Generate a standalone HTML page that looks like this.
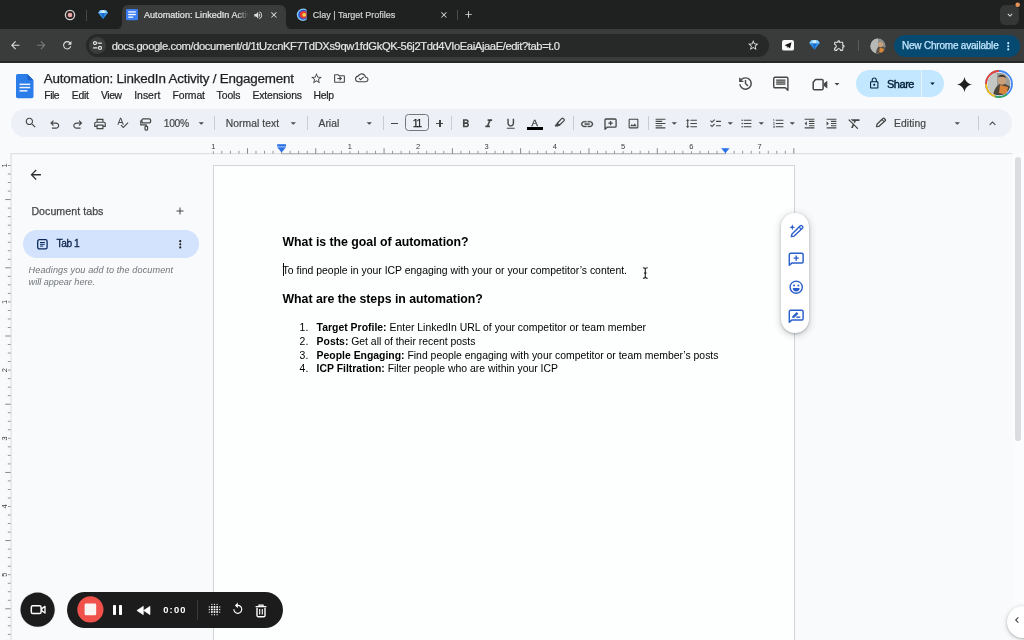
<!DOCTYPE html>
<html lang="en">
<head>
<meta charset="utf-8">
<title>Automation: LinkedIn Activity / Engagement</title>
<style>
*{box-sizing:border-box;margin:0;padding:0}
html,body{width:1024px;height:640px;overflow:hidden;background:#f8fafb;font-family:"Liberation Sans",sans-serif}
.abs{position:absolute}
.t{position:absolute;white-space:nowrap;line-height:1}
svg{position:absolute;overflow:visible}
#root{will-change:transform;position:absolute;left:0;top:0;width:1024px;height:640px;overflow:hidden;background:#f8fafb}
b{font-weight:700}
</style>
</head>
<body>
<div id="root">
<div class="abs" style="left:0px;top:0px;width:1024px;height:29px;background:#1f2020;border-radius:0px;"></div>
<div class="abs" style="left:0px;top:29px;width:1024px;height:32.5px;background:#3a3b3b;border-radius:0px;"></div>
<div class="abs" style="left:0px;top:61px;width:1024px;height:1.5px;background:#262727;border-radius:0px;"></div>
<svg style="left:0;top:0" width="1024" height="30" viewBox="0 0 1024 30"><path fill="#3a3b3b" d="M115 29.500 Q122 29.500 122 22.500 L122 12 Q122 5 129 5 L279 5 Q286 5 286 12 L286 22.500 Q286 29.500 293 29.500 Z"/></svg>
<svg style="left:63.900px;top:8.800px" width="12" height="12" viewBox="0 0 12 12"><circle cx="6" cy="6" r="4.600" fill="#2a2020" stroke="#d8d4d4" stroke-width="1.300"/><circle cx="6" cy="6" r="2.300" fill="#eaa6a6"/></svg>
<div class="abs" style="left:85.5px;top:9.5px;width:1px;height:11.5px;background:#454646;border-radius:0px;"></div>
<svg style="left:97.64px;top:10.099999999999998px" width="10.120000000000001" height="9.200000000000001" viewBox="0 0 11 10"><path d="M2.300 0.300H8.700L10.800 3.300 5.500 9.800 0.200 3.300Z" fill="#2f8de4"/><path d="M2.300 0.300H8.700L10.800 3.300H0.200Z" fill="#8fd0ff"/><path d="M3.800 3.300H7.200L5.500 9.800Z" fill="#1668c9"/><path d="M4 0.300H7L7.200 3.300H3.800Z" fill="#d6f0ff"/></svg>
<svg style="left:126.300px;top:9.300px" width="12" height="11.200" viewBox="0 0 12 11.200"><rect width="12" height="11.200" rx="1.200" fill="#3d7ef0"/><rect x="2.200" y="2.300" width="7.600" height="1.300" fill="#fff"/><rect x="2.200" y="4.900" width="7.600" height="1.300" fill="#fff"/><rect x="2.200" y="7.500" width="5" height="1.300" fill="#fff"/></svg>
<svg style="left:252.55px;top:9.55px" width="10.5" height="10.5" viewBox="0 0 24 24"><path fill="#dcdcdc" d="M3 9v6h4l5 5V4L7 9H3zm13.500 3c0-1.770-1.020-3.290-2.500-4.030v8.050c1.480-.730 2.500-2.250 2.500-4.020zM14 3.230v2.060c2.890.860 5 3.540 5 6.710s-2.110 5.850-5 6.710v2.060c4.010-.910 7-4.490 7-8.770s-2.990-7.860-7-8.770z" /></svg>
<svg style="left:269.40px;top:9.90px" width="9.8" height="9.8" viewBox="0 0 24 24"><path fill="#e6e6e6" d="M19 6.41L17.59 5 12 10.59 6.41 5 5 6.41 10.59 12 5 17.59 6.41 19 12 13.41 17.59 19 19 17.59 13.41 12z" /></svg>
<svg style="left:296px;top:8px" width="12" height="14" viewBox="296 8 12 14"><defs><clipPath id="clayc"><rect x="295" y="7" width="11.600" height="16"/></clipPath></defs><g clip-path="url(#clayc)"><circle cx="303" cy="14.800" r="6.200" fill="#86c8f2"/><circle cx="303.200" cy="14.800" r="5" fill="#2f55d4"/><circle cx="303.600" cy="14.800" r="3.700" fill="#e63b30"/><circle cx="304.200" cy="14.800" r="1.900" fill="#f6d24c"/></g></svg>
<svg style="left:438.60px;top:9.90px" width="9.8" height="9.8" viewBox="0 0 24 24"><path fill="#dcdcdc" d="M19 6.41L17.59 5 12 10.59 6.41 5 5 6.41 10.59 12 5 17.59 6.41 19 12 13.41 17.59 19 19 17.59 13.41 12z" /></svg>
<div class="abs" style="left:456.7px;top:9.8px;width:1px;height:10.7px;background:#4a4b4b;border-radius:0px;"></div>
<svg style="left:463.40px;top:8.90px" width="11.2" height="11.2" viewBox="0 0 24 24"><path fill="#dcdcdc" d="M19 13h-6v6h-2v-6H5v-2h6V5h2v6h6v2z" /></svg>
<div class="abs" style="left:1000px;top:5px;width:19px;height:19.5px;background:#353636;border-radius:5.5px;"></div>
<svg style="left:1004.50px;top:10.00px" width="10" height="10" viewBox="0 0 24 24"><path fill="#e3e3e3" d="M16.590 8.590L12 13.170 7.410 8.590 6 10l6 6 6-6z" /></svg>
<svg style="left:1014.800px;top:2.200px" width="5.400" height="5.400" viewBox="0 0 5.400 5.400"><circle cx="2.700" cy="2.700" r="2.300" fill="#e8925a"/></svg>
<svg style="left:9.45px;top:39.35px" width="12.5" height="12.5" viewBox="0 0 24 24"><path fill="#dedede" d="M20 11H7.83l5.59-5.59L12 4l-8 8 8 8 1.41-1.41L7.83 13H20v-2z" /></svg>
<svg style="left:34.95px;top:39.35px" width="12.5" height="12.5" viewBox="0 0 24 24"><path fill="#7b7c7c" d="M12 4l-1.41 1.41L16.17 11H4v2h12.17l-5.58 5.59L12 20l8-8z" /></svg>
<svg style="left:60.65px;top:39.15px" width="12.5" height="12.5" viewBox="0 0 24 24"><path fill="#dedede" d="M17.65 6.35C16.2 4.9 14.21 4 12 4c-4.42 0-7.99 3.58-7.99 8s3.57 8 7.99 8c3.73 0 6.84-2.55 7.73-6h-2.08c-.82 2.33-3.04 4-5.65 4-3.31 0-6-2.69-6-6s2.69-6 6-6c1.66 0 3.14.69 4.22 1.78L13 11h7V4l-2.35 2.35z" /></svg>
<div class="abs" style="left:86px;top:34px;width:683px;height:23px;background:#272828;border-radius:11.5px;"></div>
<svg style="left:88.500px;top:37px" width="17" height="17" viewBox="0 0 17 17"><circle cx="8.500" cy="8.500" r="8.500" fill="#3b3c3c"/><g stroke="#e3e3e3" stroke-width="1.200" fill="none" stroke-linecap="round"><circle cx="6" cy="6.100" r="1.500"/><path d="M9 6.100H12.500"/><circle cx="11" cy="10.900" r="1.500"/><path d="M4.500 10.900H8"/></g></svg>
<svg style="left:746.75px;top:39.05px" width="12.5" height="12.5" viewBox="0 0 24 24"><path fill="#e3e3e3" d="M22 9.24l-7.19-.62L12 2 9.19 8.63 2 9.24l5.46 4.73L5.82 21 12 17.27 18.18 21l-1.63-7.03L22 9.24zM12 15.4l-3.76 2.27 1-4.28-3.32-2.88 4.38-.38L12 6.1l1.71 4.04 4.38.38-3.32 2.88 1 4.28L12 15.4z" /></svg>
<svg style="left:782px;top:40.200px" width="12" height="10.600" viewBox="0 0 12.600 10.600" preserveAspectRatio="none"><rect width="12.600" height="10.600" rx="2.200" fill="#fbfbfb"/><path d="M2.600 5.200 10 2.300 8.400 8.600 6 6.500 5.300 8.200 4.900 6.100Z" fill="#151515"/></svg>
<svg style="left:808.5px;top:39.8px" width="11.0" height="10.0" viewBox="0 0 11 10"><path d="M2.300 0.300H8.700L10.800 3.300 5.500 9.800 0.200 3.300Z" fill="#2f8de4"/><path d="M2.300 0.300H8.700L10.800 3.300H0.200Z" fill="#8fd0ff"/><path d="M3.800 3.300H7.200L5.500 9.800Z" fill="#1668c9"/><path d="M4 0.300H7L7.200 3.300H3.800Z" fill="#d6f0ff"/></svg>
<svg style="left:833.30px;top:38.80px" width="13" height="13" viewBox="0 0 24 24"><path fill="#e3e3e3" d="M10.500 4.500c.280 0 .500.220.500.500v2h6v6h2c.280 0 .500.220.500.500s-.220.500-.500.500h-2v6h-2.120c-.680-1.750-2.390-3-4.380-3s-3.700 1.250-4.380 3H4v-2.120c1.750-.680 3-2.390 3-4.380 0-1.990-1.240-3.700-2.990-4.380L4 7h6V5c0-.280.220-.500.500-.500m0-2C9.120 2.500 8 3.620 8 5H4c-1.100 0-1.990.900-1.990 2v3.800h.290c1.490 0 2.700 1.210 2.700 2.700s-1.210 2.700-2.700 2.700H2V20c0 1.100.900 2 2 2h3.800v-.300c0-1.490 1.210-2.700 2.700-2.700s2.700 1.210 2.700 2.700v.300H17c1.100 0 2-.900 2-2v-4c1.380 0 2.500-1.120 2.500-2.500S20.380 11 19 11V7c0-1.100-.900-2-2-2h-4c0-1.380-1.120-2.500-2.500-2.500z" /></svg>
<div class="abs" style="left:858.3px;top:40px;width:1px;height:11px;background:#5a5b5b;border-radius:0px;"></div>
<svg style="left:870px;top:37.500px" width="16" height="16" viewBox="0 0 16 16"><defs><clipPath id="av1"><circle cx="8" cy="8" r="7.600"/></clipPath></defs><g clip-path="url(#av1)"><rect width="16" height="16" fill="#8e8f8c"/><rect x="0" y="0" width="8" height="16" fill="#b7b9b6"/><path d="M6 16C6 10 9 7 12 8L16 10V16Z" fill="#5c5348"/><circle cx="10.500" cy="6.500" r="2.600" fill="#c9a07c"/><path d="M10 9.500 14 11 13 15 9 14Z" fill="#d8873a"/></g></svg>
<div class="abs" style="left:894px;top:34.7px;width:125.5px;height:22.2px;background:#064a72;border-radius:11.1px;"></div>
<svg style="left:1002.05px;top:39.55px" width="12.5" height="12.5" viewBox="0 0 24 24"><path fill="#c2e7ff" d="M12 8c1.1 0 2-.9 2-2s-.9-2-2-2-2 .9-2 2 .9 2 2 2zm0 2c-1.1 0-2 .9-2 2s.9 2 2 2 2-.9 2-2-.9-2-2-2zm0 6c-1.1 0-2 .9-2 2s.9 2 2 2 2-.9 2-2-.9-2-2-2z" /></svg>
<svg style="left:15.500px;top:73.700px" width="17.500" height="24.300" viewBox="0 0 17.500 24.300"><path d="M1.800 0H11.300L17.500 6.200V22.500A1.800 1.800 0 0 1 15.700 24.300H1.800A1.800 1.800 0 0 1 0 22.500V1.800A1.800 1.800 0 0 1 1.800 0Z" fill="#2b7de9"/><path d="M11.300 0 17.500 6.200H13.100A1.800 1.800 0 0 1 11.300 4.400Z" fill="#1b62c9"/><rect x="3.500" y="9.600" width="10.700" height="1.500" fill="#eef4fe"/><rect x="3.500" y="12.800" width="10.700" height="1.500" fill="#eef4fe"/><rect x="3.500" y="16.100" width="7.900" height="1.500" fill="#eef4fe"/></svg>
<svg style="left:309.80px;top:71.50px" width="13" height="13" viewBox="0 0 24 24"><path fill="#444746" d="M22 9.24l-7.19-.62L12 2 9.19 8.63 2 9.24l5.46 4.73L5.82 21 12 17.27 18.18 21l-1.63-7.03L22 9.24zM12 15.4l-3.76 2.27 1-4.28-3.32-2.88 4.38-.38L12 6.1l1.71 4.04 4.38.38-3.32 2.88 1 4.28L12 15.4z" /></svg>
<svg style="left:332.50px;top:71.50px" width="13" height="13" viewBox="0 0 24 24"><path fill="#444746" d="M20 6h-8l-2-2H4c-1.100 0-2 .900-2 2v12c0 1.100.900 2 2 2h16c1.100 0 2-.900 2-2V8c0-1.100-.900-2-2-2zm0 12H4V6h5.170l2 2H20v10zm-7.160-5H8v-2h4.840l-1.590-1.590L12.660 8l4 4-4 4-1.410-1.410L12.840 13z" /></svg>
<svg style="left:355.25px;top:71.25px" width="13.5" height="13.5" viewBox="0 0 24 24"><path fill="#444746" d="M19.350 10.040C18.670 6.590 15.640 4 12 4 9.110 4 6.600 5.640 5.350 8.040 2.340 8.360 0 10.910 0 14c0 3.310 2.690 6 6 6h13c2.760 0 5-2.240 5-5 0-2.640-2.050-4.780-4.650-4.960zM19 18H6c-2.210 0-4-1.790-4-4 0-2.050 1.530-3.760 3.560-3.970l1.070-.110.500-.950C8.080 7.140 9.940 6 12 6c2.620 0 4.880 1.860 5.390 4.430l.300 1.500 1.530.110c1.560.100 2.780 1.410 2.780 2.960 0 1.650-1.350 3-3 3zm-9-3.820l-2.090-2.090L6.500 13.500 10 17l6.010-6.010-1.410-1.410z" /></svg>
<svg style="left:737px;top:75.200px" width="17" height="17" viewBox="0 0 24 24"><path fill="#444746" d="M12 21q-3.450 0-6.012-2.287T3.050 13H5.100q.350 2.600 2.313 4.300T12 19q2.925 0 4.963-2.037T19 12q0-2.925-2.037-4.963T12 5q-1.725 0-3.225.800T6.250 8H9v2H3V4h2v2.350q1.275-1.600 3.113-2.475T12 3q1.875 0 3.513.713t2.850 1.925q1.212 1.212 1.925 2.850T21 12q0 1.875-.713 3.513t-1.925 2.850q-1.212 1.212-2.850 1.925T12 21Zm2.800-4.800L11 12.400V7h2v4.600l3.200 3.200-1.400 1.400Z"/></svg>
<svg style="left:773px;top:76.300px" width="16" height="15.500" viewBox="0 0 16 15.500"><path d="M2 1.300H13.600A1.300 1.300 0 0 1 14.900 2.600V14.200L12.300 11.800H2A1.300 1.300 0 0 1 0.700 10.500V2.600A1.300 1.300 0 0 1 2 1.300Z" fill="none" stroke="#444746" stroke-width="1.400" stroke-linejoin="round"/><path d="M3.200 4.100H12.400M3.200 6.100H12.400M3.200 8.100H12.400" stroke="#444746" stroke-width="1.300"/><path d="M3.200 5.100H12.400M3.200 7.100H12.400" stroke="#444746" stroke-width="0.700" opacity="0.550"/></svg>
<svg style="left:811.500px;top:77.500px" width="16" height="13" viewBox="0 0 16 13"><path d="M3.600 1.500H9.800A1.300 1.300 0 0 1 11.100 2.800V10.400A1.300 1.300 0 0 1 9.800 11.700H2.500A1.300 1.300 0 0 1 1.200 10.400V4.200Z" fill="none" stroke="#444746" stroke-width="1.500" stroke-linejoin="round"/><path d="M12 5.300 15.300 2.700V10.500L12 7.900Z" fill="#444746"/></svg>
<svg style="left:830.70px;top:77.90px" width="12" height="12" viewBox="0 0 24 24"><path fill="#444746" d="M7 10l5 5 5-5z" /></svg>
<div class="abs" style="left:856px;top:70px;width:88.2px;height:27px;background:#c2e7ff;border-radius:13.5px;"></div>
<div class="abs" style="left:920.6px;top:70px;width:1px;height:27px;background:#e8f4fd;border-radius:0px;"></div>
<svg style="left:867.65px;top:77.05px" width="12.5" height="12.5" viewBox="0 0 24 24"><path fill="#001d35" d="M18 8h-1V6c0-2.760-2.240-5-5-5S7 3.240 7 6v2H6c-1.100 0-2 .900-2 2v10c0 1.100.900 2 2 2h12c1.100 0 2-.900 2-2V10c0-1.100-.900-2-2-2zM9 6c0-1.660 1.340-3 3-3s3 1.340 3 3v2H9V6zm9 14H6V10h12v10zm-6-3c1.100 0 2-.900 2-2s-.900-2-2-2-2 .900-2 2 .900 2 2 2z" /></svg>
<svg style="left:926.50px;top:78.30px" width="11" height="11" viewBox="0 0 24 24"><path fill="#001d35" d="M7 10l5 5 5-5z" /></svg>
<svg style="left:955.80px;top:75.50px" width="17" height="17" viewBox="0 0 24 24"><path fill="#1f1f1f" d="M12 1C12.800 7 17 11.200 23 12C17 12.800 12.800 17 12 23C11.200 17 7 12.800 1 12C7 11.200 11.200 7 12 1Z" /></svg>
<svg style="left:984.500px;top:69.700px" width="28" height="28" viewBox="0 0 28 28"><defs><clipPath id="av2"><circle cx="14" cy="14" r="11.300"/></clipPath></defs><circle cx="14" cy="14" r="13" fill="none" stroke="#4285f4" stroke-width="1.800"/><path d="M14 1A13 13 0 0 0 1 14" fill="none" stroke="#ea4335" stroke-width="1.800"/><path d="M1 14A13 13 0 0 0 10 26.400" fill="none" stroke="#fbbc04" stroke-width="1.800"/><path d="M10 26.400A13 13 0 0 0 22 24.200" fill="none" stroke="#34a853" stroke-width="1.800"/><g clip-path="url(#av2)"><rect width="28" height="28" fill="#9a9c98"/><rect x="0" y="0" width="12" height="28" fill="#c3c6c2"/><path d="M8 28C8 18 14 12 20 14L28 18V28Z" fill="#4d463d"/><circle cx="17" cy="10.500" r="4.200" fill="#caa07c"/><path d="M15 15 23 17 21.500 25 14 23Z" fill="#d98539"/><path d="M13 7C14 4 20 4 21 8 19 6.500 16 6.500 13 7Z" fill="#3a332c"/></g></svg>
<div class="abs" style="left:11px;top:108.9px;width:1001.3px;height:27.8px;background:#edf0f6;border-radius:13.9px;"></div>
<svg style="left:23.60px;top:116.10px" width="13.6" height="13.6" viewBox="0 0 24 24"><path fill="#444746" d="M15.5 14h-.79l-.28-.27C15.41 12.59 16 11.11 16 9.5 16 5.91 13.09 3 9.5 3S3 5.91 3 9.5 5.91 16 9.5 16c1.61 0 3.09-.59 4.23-1.57l.27.28v.79l5 4.99L20.49 19l-4.99-5zm-6 0C7.01 14 5 11.99 5 9.5S7.01 5 9.5 5 14 7.01 14 9.5 11.99 14 9.5 14z" /></svg>
<svg style="left:48px;top:117.60000000000001px" width="13.500" height="13.500" viewBox="0 0 24 24"><path fill="#444746" d="M7 19v-2h7.100q1.575 0 2.738-1T18 13.500q0-1.500-1.162-2.500T14.100 10H7.800l2.600 2.600L9 14 4 9l5-5 1.400 1.400L7.800 8h6.300q2.425 0 4.163 1.575T20 13.500q0 2.350-1.737 3.925T14.100 19H7Z"/></svg>
<svg style="left:70.700px;top:117.60000000000001px" width="13.500" height="13.500" viewBox="0 0 24 24"><path transform="translate(24,0) scale(-1,1)" fill="#444746" d="M7 19v-2h7.100q1.575 0 2.738-1T18 13.500q0-1.500-1.162-2.500T14.100 10H7.800l2.600 2.600L9 14 4 9l5-5 1.400 1.400L7.800 8h6.300q2.425 0 4.163 1.575T20 13.500q0 2.350-1.737 3.925T14.100 19H7Z"/></svg>
<svg style="left:93.20px;top:116.50px" width="14" height="14" viewBox="0 0 24 24"><path fill="#444746" d="M19 8h-1V3H6v5H5c-1.66 0-3 1.34-3 3v6h4v4h12v-4h4v-6c0-1.660-1.340-3-3-3zM8 5h8v3H8V5zm8 14H8v-4h8v4zm2-4v-2H6v2H4v-4c0-.55.45-1 1-1h14c.55 0 1 .45 1 1v4h-2z" /></svg>
<svg style="left:116.30px;top:116.40px" width="13" height="13" viewBox="0 0 24 24"><path fill="#444746" d="M12.450 16h2.090L9.430 3H7.570L2.460 16h2.090l1.120-3h5.640l1.140 3zm-6.020-5L8.500 5.480 10.570 11H6.430zm15.160.590l-8.090 8.090L9.830 16l-1.410 1.410 5.090 5.090L23 13l-1.410-1.410z" /></svg>
<svg style="left:139.500px;top:117.500px" width="11.500" height="13" viewBox="0 0 11.500 13"><rect x="1.900" y="0.900" width="8.700" height="4" rx="1.300" fill="none" stroke="#444746" stroke-width="1.300"/><path d="M1.900 2.900H0.800V6.900H6.300V8.300" fill="none" stroke="#444746" stroke-width="1.200" stroke-linejoin="round"/><rect x="5" y="8.400" width="2.600" height="3.700" rx="0.800" fill="none" stroke="#444746" stroke-width="1.200"/></svg>
<svg style="left:195.20px;top:117.10px" width="12.6" height="12.6" viewBox="0 0 24 24"><path fill="#444746" d="M7 10l5 5 5-5z" /></svg>
<div class="abs" style="left:213.8px;top:115.8px;width:1px;height:14px;background:#c9ccd0;border-radius:0px;"></div>
<svg style="left:287.20px;top:117.10px" width="12.6" height="12.6" viewBox="0 0 24 24"><path fill="#444746" d="M7 10l5 5 5-5z" /></svg>
<div class="abs" style="left:306.8px;top:115.8px;width:1px;height:14px;background:#c9ccd0;border-radius:0px;"></div>
<svg style="left:362.70px;top:117.10px" width="12.6" height="12.6" viewBox="0 0 24 24"><path fill="#444746" d="M7 10l5 5 5-5z" /></svg>
<div class="abs" style="left:382.6px;top:115.8px;width:1px;height:14px;background:#c9ccd0;border-radius:0px;"></div>
<div class="abs" style="left:390.8px;top:122.55px;width:7.2px;height:1.4px;background:#444746;border-radius:0px;"></div>
<div class="abs" style="left:405.200px;top:114.300px;width:24px;height:17px;border:1px solid #747775;border-radius:3.500px"></div>
<div class="abs" style="left:436.3px;top:122.55px;width:7.2px;height:1.4px;background:#444746;border-radius:0px;"></div>
<div class="abs" style="left:439.2px;top:119.65px;width:1.4px;height:7.2px;background:#444746;border-radius:0px;"></div>
<div class="abs" style="left:451.3px;top:115.8px;width:1px;height:14px;background:#c9ccd0;border-radius:0px;"></div>
<svg style="left:458.75px;top:117.35px" width="13.5" height="13.5" viewBox="0 0 24 24"><path fill="#444746" d="M15.6 10.79c.97-.67 1.65-1.77 1.65-2.79 0-2.260-1.750-4-4-4H7v14h7.040c2.090 0 3.710-1.700 3.710-3.790 0-1.520-.860-2.820-2.150-3.420zM10 6.500h3c.830 0 1.500.670 1.500 1.500s-.670 1.500-1.500 1.500h-3v-3zm3.500 9H10v-3h3.500c.830 0 1.500.670 1.500 1.500s-.670 1.500-1.500 1.500z" /></svg>
<svg style="left:481.75px;top:117.35px" width="13.5" height="13.5" viewBox="0 0 24 24"><path fill="#444746" d="M10 4v3h2.210l-3.420 8H6v3h8v-3h-2.210l3.420-8H18V4z" /></svg>
<svg style="left:503.75px;top:117.35px" width="13.5" height="13.5" viewBox="0 0 24 24"><path fill="#444746" d="M12 17c3.310 0 6-2.690 6-6V3h-2.500v8c0 1.930-1.570 3.500-3.500 3.500S8.500 12.930 8.500 11V3H6v8c0 3.310 2.690 6 6 6zm-7 2v2h14v-2H5z" /></svg>
<div class="abs" style="left:526.8px;top:127.2px;width:15.8px;height:2.5px;background:#000;border-radius:0px;"></div>
<svg style="left:553.500px;top:116.500px" width="11.500" height="10.500" viewBox="0 0 11.500 10.500"><path d="M3.300 6.200 7.900 1.400A0.900 0.900 0 0 1 9.100 1.400L10.100 2.400A0.900 0.900 0 0 1 10.100 3.600L5.300 8.200Z" fill="none" stroke="#444746" stroke-width="1.300" stroke-linejoin="round"/><path d="M3.300 6.200 5.300 8.200 3.600 9.300H1.300V8Z" fill="#444746" stroke="#444746" stroke-width="0.600" stroke-linejoin="round"/></svg>
<div class="abs" style="left:572.8px;top:115.8px;width:1px;height:14px;background:#c9ccd0;border-radius:0px;"></div>
<svg style="left:580.00px;top:116.70px" width="14.2" height="14.2" viewBox="0 0 24 24"><path fill="#444746" d="M3.9 12c0-1.71 1.39-3.1 3.1-3.1h4V7H7c-2.76 0-5 2.24-5 5s2.24 5 5 5h4v-1.900H7c-1.71 0-3.100-1.390-3.100-3.100zM8 13h8v-2H8v2zm9-6h-4v1.900h4c1.710 0 3.100 1.390 3.100 3.100s-1.390 3.100-3.100 3.100h-4V17h4c2.760 0 5-2.240 5-5s-2.240-5-5-5z" stroke="#444746" stroke-width="0.500"/></svg>
<svg style="left:603.700px;top:117.500px" width="13" height="12.500" viewBox="0 0 13 12.500"><path d="M2 1H11.100A1 1 0 0 1 12.100 2V8.200A1 1 0 0 1 11.100 9.200H3.200L1 11.200V2A1 1 0 0 1 2 1Z" fill="none" stroke="#444746" stroke-width="1.300" stroke-linejoin="round"/><path d="M6.550 2.900V7.300M4.350 5.100H8.750" stroke="#444746" stroke-width="1.250"/></svg>
<svg style="left:626.70px;top:116.70px" width="13" height="13" viewBox="0 0 24 24"><path fill="#444746" d="M19 5v14H5V5h14m0-2H5c-1.100 0-2 .900-2 2v14c0 1.100.900 2 2 2h14c1.100 0 2-.900 2-2V5c0-1.100-.900-2-2-2zm-4.860 8.860l-3 3.870L9 13.140 6 17h12l-3.860-5.140z" /></svg>
<div class="abs" style="left:647.6px;top:115.8px;width:1px;height:14px;background:#c9ccd0;border-radius:0px;"></div>
<svg style="left:654.00px;top:116.70px" width="13" height="13" viewBox="0 0 24 24"><path fill="#444746" d="M15 15H3v2h12v-2zm0-8H3v2h12V7zM3 13h18v-2H3v2zm0 8h18v-2H3v2zM3 3v2h18V3H3z" /></svg>
<svg style="left:667.50px;top:117.10px" width="12.6" height="12.6" viewBox="0 0 24 24"><path fill="#444746" d="M7 10l5 5 5-5z" /></svg>
<svg style="left:685.00px;top:116.70px" width="13" height="13" viewBox="0 0 24 24"><path fill="#444746" d="M6 7h2.500L5 3.500 1.500 7H4v10H1.500L5 20.500 8.500 17H6V7zm4-2v2h12V5H10zm0 14h12v-2H10v2zm0-6h12v-2H10v2z" /></svg>
<svg style="left:708.50px;top:116.70px" width="13" height="13" viewBox="0 0 24 24"><path fill="#444746" d="M22 7h-9v2h9V7zm0 8h-9v2h9v-2zM5.540 11L2 7.460l1.410-1.410 2.120 2.120 4.240-4.240 1.410 1.410L5.540 11zm0 8L2 15.460l1.410-1.410 2.120 2.120 4.240-4.240 1.410 1.410L5.540 19z" /></svg>
<svg style="left:723.90px;top:117.10px" width="12.6" height="12.6" viewBox="0 0 24 24"><path fill="#444746" d="M7 10l5 5 5-5z" /></svg>
<svg style="left:740.00px;top:116.70px" width="13" height="13" viewBox="0 0 24 24"><path fill="#444746" d="M4 10.500c-.830 0-1.500.670-1.500 1.500s.670 1.500 1.500 1.500 1.500-.670 1.500-1.500-.670-1.500-1.500-1.500zm0-6c-.830 0-1.500.670-1.500 1.500S3.170 7.500 4 7.500 5.500 6.830 5.500 6 4.830 4.500 4 4.500zm0 12c-.830 0-1.500.680-1.500 1.500s.680 1.500 1.500 1.500 1.500-.680 1.500-1.500-.670-1.500-1.500-1.500zM7 19h14v-2H7v2zm0-6h14v-2H7v2zm0-8v2h14V5H7z" /></svg>
<svg style="left:754.90px;top:117.10px" width="12.6" height="12.6" viewBox="0 0 24 24"><path fill="#444746" d="M7 10l5 5 5-5z" /></svg>
<svg style="left:772.00px;top:116.70px" width="13" height="13" viewBox="0 0 24 24"><path fill="#444746" d="M2 17h2v.500H3v1h1v.500H2v1h3v-4H2v1zm1-9h1V4H2v1h1v3zm-1 3h1.800L2 13.100v.900h3v-1H3.200L5 10.900V10H2v1zm5-6v2h14V5H7zm0 14h14v-2H7v2zm0-6h14v-2H7v2z" /></svg>
<svg style="left:786.40px;top:117.10px" width="12.6" height="12.6" viewBox="0 0 24 24"><path fill="#444746" d="M7 10l5 5 5-5z" /></svg>
<svg style="left:802.50px;top:116.70px" width="13" height="13" viewBox="0 0 24 24"><path fill="#444746" d="M11 17h10v-2H11v2zm-8-5l4 4V8l-4 4zm0 9h18v-2H3v2zM3 3v2h18V3H3zm8 6h10V7H11v2zm0 4h10v-2H11v2z" /></svg>
<svg style="left:825.20px;top:116.70px" width="13" height="13" viewBox="0 0 24 24"><path fill="#444746" d="M3 21h18v-2H3v2zM3 8v8l4-4-4-4zm8 9h10v-2H11v2zM3 3v2h18V3H3zm8 6h10V7H11v2zm0 4h10v-2H11v2z" /></svg>
<svg style="left:847.40px;top:116.10px" width="15" height="15" viewBox="0 0 24 24"><path fill="#444746" d="M3.270 5L2 6.270l6.970 6.970L6.500 19h3l1.570-3.660L16.730 21 18 19.730 3.550 5.270 3.270 5zM6 5v.180L8.820 8h2.400l-.720 1.680 2.100 2.100L14.210 8H20V5H6z" /></svg>
<svg style="left:875.300px;top:117.300px" width="12" height="11" viewBox="0 0 12 11"><path d="M1.500 9.600 2 7.300 7.900 1.500A0.900 0.900 0 0 1 9.200 1.500L10.200 2.500A0.900 0.900 0 0 1 10.200 3.800L4 9.300Z" fill="none" stroke="#444746" stroke-width="1.300" stroke-linejoin="round"/><path d="M7 2.600 9 4.600" stroke="#444746" stroke-width="1.100"/></svg>
<svg style="left:950.70px;top:117.10px" width="12.6" height="12.6" viewBox="0 0 24 24"><path fill="#444746" d="M7 10l5 5 5-5z" /></svg>
<div class="abs" style="left:978.3px;top:115.8px;width:1px;height:14px;background:#c9ccd0;border-radius:0px;"></div>
<svg style="left:986.00px;top:116.70px" width="13" height="13" viewBox="0 0 24 24"><path fill="#444746" d="M12 8l-6 6 1.410 1.410L12 10.830l4.590 4.580L18 14z" /></svg>
<svg style="left:0;top:138px" width="1024" height="20" viewBox="0 138 1024 20"><rect x="11" y="153.100" width="1001.500" height="1.100" fill="#dcdee1"/><rect x="281.6" y="153" width="443.94999999999993" height="1.300" fill="#b9bcbf"/><rect x="212.85" y="151.200" width="0.900" height="2.500" fill="#8a8d90"/><rect x="221.39" y="150.800" width="0.900" height="2.900" fill="#8a8d90"/><rect x="229.93" y="150.800" width="0.900" height="2.900" fill="#8a8d90"/><rect x="238.46" y="150.800" width="0.900" height="2.900" fill="#8a8d90"/><rect x="247.00" y="148.200" width="0.900" height="5.500" fill="#7a7d80"/><rect x="255.54" y="150.800" width="0.900" height="2.900" fill="#8a8d90"/><rect x="264.08" y="150.800" width="0.900" height="2.900" fill="#8a8d90"/><rect x="272.61" y="150.800" width="0.900" height="2.900" fill="#8a8d90"/><rect x="281.15" y="151.200" width="0.900" height="2.500" fill="#8a8d90"/><rect x="289.69" y="150.800" width="0.900" height="2.900" fill="#8a8d90"/><rect x="298.23" y="150.800" width="0.900" height="2.900" fill="#8a8d90"/><rect x="306.76" y="150.800" width="0.900" height="2.900" fill="#8a8d90"/><rect x="315.30" y="148.200" width="0.900" height="5.500" fill="#7a7d80"/><rect x="323.84" y="150.800" width="0.900" height="2.900" fill="#8a8d90"/><rect x="332.38" y="150.800" width="0.900" height="2.900" fill="#8a8d90"/><rect x="340.91" y="150.800" width="0.900" height="2.900" fill="#8a8d90"/><rect x="349.45" y="151.200" width="0.900" height="2.500" fill="#8a8d90"/><rect x="357.99" y="150.800" width="0.900" height="2.900" fill="#8a8d90"/><rect x="366.53" y="150.800" width="0.900" height="2.900" fill="#8a8d90"/><rect x="375.06" y="150.800" width="0.900" height="2.900" fill="#8a8d90"/><rect x="383.60" y="148.200" width="0.900" height="5.500" fill="#7a7d80"/><rect x="392.14" y="150.800" width="0.900" height="2.900" fill="#8a8d90"/><rect x="400.68" y="150.800" width="0.900" height="2.900" fill="#8a8d90"/><rect x="409.21" y="150.800" width="0.900" height="2.900" fill="#8a8d90"/><rect x="417.75" y="151.200" width="0.900" height="2.500" fill="#8a8d90"/><rect x="426.29" y="150.800" width="0.900" height="2.900" fill="#8a8d90"/><rect x="434.82" y="150.800" width="0.900" height="2.900" fill="#8a8d90"/><rect x="443.36" y="150.800" width="0.900" height="2.900" fill="#8a8d90"/><rect x="451.90" y="148.200" width="0.900" height="5.500" fill="#7a7d80"/><rect x="460.44" y="150.800" width="0.900" height="2.900" fill="#8a8d90"/><rect x="468.98" y="150.800" width="0.900" height="2.900" fill="#8a8d90"/><rect x="477.51" y="150.800" width="0.900" height="2.900" fill="#8a8d90"/><rect x="486.05" y="151.200" width="0.900" height="2.500" fill="#8a8d90"/><rect x="494.59" y="150.800" width="0.900" height="2.900" fill="#8a8d90"/><rect x="503.13" y="150.800" width="0.900" height="2.900" fill="#8a8d90"/><rect x="511.66" y="150.800" width="0.900" height="2.900" fill="#8a8d90"/><rect x="520.20" y="148.200" width="0.900" height="5.500" fill="#7a7d80"/><rect x="528.74" y="150.800" width="0.900" height="2.900" fill="#8a8d90"/><rect x="537.27" y="150.800" width="0.900" height="2.900" fill="#8a8d90"/><rect x="545.81" y="150.800" width="0.900" height="2.900" fill="#8a8d90"/><rect x="554.35" y="151.200" width="0.900" height="2.500" fill="#8a8d90"/><rect x="562.89" y="150.800" width="0.900" height="2.900" fill="#8a8d90"/><rect x="571.42" y="150.800" width="0.900" height="2.900" fill="#8a8d90"/><rect x="579.96" y="150.800" width="0.900" height="2.900" fill="#8a8d90"/><rect x="588.50" y="148.200" width="0.900" height="5.500" fill="#7a7d80"/><rect x="597.04" y="150.800" width="0.900" height="2.900" fill="#8a8d90"/><rect x="605.58" y="150.800" width="0.900" height="2.900" fill="#8a8d90"/><rect x="614.11" y="150.800" width="0.900" height="2.900" fill="#8a8d90"/><rect x="622.65" y="151.200" width="0.900" height="2.500" fill="#8a8d90"/><rect x="631.19" y="150.800" width="0.900" height="2.900" fill="#8a8d90"/><rect x="639.72" y="150.800" width="0.900" height="2.900" fill="#8a8d90"/><rect x="648.26" y="150.800" width="0.900" height="2.900" fill="#8a8d90"/><rect x="656.80" y="148.200" width="0.900" height="5.500" fill="#7a7d80"/><rect x="665.34" y="150.800" width="0.900" height="2.900" fill="#8a8d90"/><rect x="673.88" y="150.800" width="0.900" height="2.900" fill="#8a8d90"/><rect x="682.41" y="150.800" width="0.900" height="2.900" fill="#8a8d90"/><rect x="690.95" y="151.200" width="0.900" height="2.500" fill="#8a8d90"/><rect x="699.49" y="150.800" width="0.900" height="2.900" fill="#8a8d90"/><rect x="708.02" y="150.800" width="0.900" height="2.900" fill="#8a8d90"/><rect x="716.56" y="150.800" width="0.900" height="2.900" fill="#8a8d90"/><rect x="725.10" y="148.200" width="0.900" height="5.500" fill="#7a7d80"/><rect x="733.64" y="150.800" width="0.900" height="2.900" fill="#8a8d90"/><rect x="742.17" y="150.800" width="0.900" height="2.900" fill="#8a8d90"/><rect x="750.71" y="150.800" width="0.900" height="2.900" fill="#8a8d90"/><rect x="759.25" y="151.200" width="0.900" height="2.500" fill="#8a8d90"/><rect x="767.79" y="150.800" width="0.900" height="2.900" fill="#8a8d90"/><rect x="776.32" y="150.800" width="0.900" height="2.900" fill="#8a8d90"/><rect x="784.86" y="150.800" width="0.900" height="2.900" fill="#8a8d90"/><rect x="793.40" y="148.200" width="0.900" height="5.500" fill="#7a7d80"/></svg>
<svg style="left:277.00px;top:144px" width="9.200" height="9" viewBox="0 0 9.200 9"><rect x="0.200" y="0.200" width="8.800" height="2.400" fill="#2b72e6"/><path d="M0.200 3.300H9L4.600 8.500Z" fill="#2b72e6"/></svg>
<svg style="left:721.15px;top:147.800px" width="8.800" height="5.400" viewBox="0 0 8.800 5.400"><path d="M0.200 0.200H8.600L4.400 5.200Z" fill="#2b72e6"/></svg>
<svg style="left:0;top:153px" width="13" height="487" viewBox="0 153 13 487"><rect x="10.500" y="153.100" width="1.100" height="487" fill="#dcdee1"/><rect x="8" y="165.05" width="2.600" height="0.900" fill="#8a8d90"/><rect x="7.800" y="173.57" width="2.800" height="0.900" fill="#8a8d90"/><rect x="7.800" y="182.10" width="2.800" height="0.900" fill="#8a8d90"/><rect x="7.800" y="190.62" width="2.800" height="0.900" fill="#8a8d90"/><rect x="5.200" y="199.15" width="5.400" height="0.900" fill="#7a7d80"/><rect x="7.800" y="207.68" width="2.800" height="0.900" fill="#8a8d90"/><rect x="7.800" y="216.20" width="2.800" height="0.900" fill="#8a8d90"/><rect x="7.800" y="224.72" width="2.800" height="0.900" fill="#8a8d90"/><rect x="8" y="233.25" width="2.600" height="0.900" fill="#8a8d90"/><rect x="7.800" y="241.78" width="2.800" height="0.900" fill="#8a8d90"/><rect x="7.800" y="250.30" width="2.800" height="0.900" fill="#8a8d90"/><rect x="7.800" y="258.82" width="2.800" height="0.900" fill="#8a8d90"/><rect x="5.200" y="267.35" width="5.400" height="0.900" fill="#7a7d80"/><rect x="7.800" y="275.88" width="2.800" height="0.900" fill="#8a8d90"/><rect x="7.800" y="284.40" width="2.800" height="0.900" fill="#8a8d90"/><rect x="7.800" y="292.93" width="2.800" height="0.900" fill="#8a8d90"/><rect x="8" y="301.45" width="2.600" height="0.900" fill="#8a8d90"/><rect x="7.800" y="309.98" width="2.800" height="0.900" fill="#8a8d90"/><rect x="7.800" y="318.50" width="2.800" height="0.900" fill="#8a8d90"/><rect x="7.800" y="327.03" width="2.800" height="0.900" fill="#8a8d90"/><rect x="5.200" y="335.55" width="5.400" height="0.900" fill="#7a7d80"/><rect x="7.800" y="344.07" width="2.800" height="0.900" fill="#8a8d90"/><rect x="7.800" y="352.60" width="2.800" height="0.900" fill="#8a8d90"/><rect x="7.800" y="361.12" width="2.800" height="0.900" fill="#8a8d90"/><rect x="8" y="369.65" width="2.600" height="0.900" fill="#8a8d90"/><rect x="7.800" y="378.18" width="2.800" height="0.900" fill="#8a8d90"/><rect x="7.800" y="386.70" width="2.800" height="0.900" fill="#8a8d90"/><rect x="7.800" y="395.22" width="2.800" height="0.900" fill="#8a8d90"/><rect x="5.200" y="403.75" width="5.400" height="0.900" fill="#7a7d80"/><rect x="7.800" y="412.28" width="2.800" height="0.900" fill="#8a8d90"/><rect x="7.800" y="420.80" width="2.800" height="0.900" fill="#8a8d90"/><rect x="7.800" y="429.32" width="2.800" height="0.900" fill="#8a8d90"/><rect x="8" y="437.85" width="2.600" height="0.900" fill="#8a8d90"/><rect x="7.800" y="446.38" width="2.800" height="0.900" fill="#8a8d90"/><rect x="7.800" y="454.90" width="2.800" height="0.900" fill="#8a8d90"/><rect x="7.800" y="463.43" width="2.800" height="0.900" fill="#8a8d90"/><rect x="5.200" y="471.95" width="5.400" height="0.900" fill="#7a7d80"/><rect x="7.800" y="480.48" width="2.800" height="0.900" fill="#8a8d90"/><rect x="7.800" y="489.00" width="2.800" height="0.900" fill="#8a8d90"/><rect x="7.800" y="497.53" width="2.800" height="0.900" fill="#8a8d90"/><rect x="8" y="506.05" width="2.600" height="0.900" fill="#8a8d90"/><rect x="7.800" y="514.57" width="2.800" height="0.900" fill="#8a8d90"/><rect x="7.800" y="523.10" width="2.800" height="0.900" fill="#8a8d90"/><rect x="7.800" y="531.62" width="2.800" height="0.900" fill="#8a8d90"/><rect x="5.200" y="540.15" width="5.400" height="0.900" fill="#7a7d80"/><rect x="7.800" y="548.67" width="2.800" height="0.900" fill="#8a8d90"/><rect x="7.800" y="557.20" width="2.800" height="0.900" fill="#8a8d90"/><rect x="7.800" y="565.72" width="2.800" height="0.900" fill="#8a8d90"/><rect x="8" y="574.25" width="2.600" height="0.900" fill="#8a8d90"/><rect x="7.800" y="582.77" width="2.800" height="0.900" fill="#8a8d90"/><rect x="7.800" y="591.30" width="2.800" height="0.900" fill="#8a8d90"/><rect x="7.800" y="599.82" width="2.800" height="0.900" fill="#8a8d90"/><rect x="5.200" y="608.35" width="5.400" height="0.900" fill="#7a7d80"/><rect x="7.800" y="616.88" width="2.800" height="0.900" fill="#8a8d90"/><rect x="7.800" y="625.40" width="2.800" height="0.900" fill="#8a8d90"/><rect x="7.800" y="633.92" width="2.800" height="0.900" fill="#8a8d90"/><text x="4.300" y="168.10" font-size="7.500" fill="#3c4043" font-family="Liberation Sans, sans-serif" transform="rotate(-90 4.300 165.50)" text-anchor="middle">1</text><text x="4.300" y="304.50" font-size="7.500" fill="#3c4043" font-family="Liberation Sans, sans-serif" transform="rotate(-90 4.300 301.90)" text-anchor="middle">1</text><text x="4.300" y="372.70" font-size="7.500" fill="#3c4043" font-family="Liberation Sans, sans-serif" transform="rotate(-90 4.300 370.10)" text-anchor="middle">2</text><text x="4.300" y="440.90" font-size="7.500" fill="#3c4043" font-family="Liberation Sans, sans-serif" transform="rotate(-90 4.300 438.30)" text-anchor="middle">3</text><text x="4.300" y="509.10" font-size="7.500" fill="#3c4043" font-family="Liberation Sans, sans-serif" transform="rotate(-90 4.300 506.50)" text-anchor="middle">4</text><text x="4.300" y="577.30" font-size="7.500" fill="#3c4043" font-family="Liberation Sans, sans-serif" transform="rotate(-90 4.300 574.70)" text-anchor="middle">5</text></svg>
<svg style="left:28.15px;top:167.35px" width="15.5" height="15.5" viewBox="0 0 24 24"><path fill="#2d2f31" d="M20 11H7.83l5.59-5.59L12 4l-8 8 8 8 1.41-1.41L7.83 13H20v-2z" /></svg>
<svg style="left:173.80px;top:205.20px" width="12" height="12" viewBox="0 0 24 24"><path fill="#444746" d="M19 13h-6v6h-2v-6H5v-2h6V5h2v6h6v2z" /></svg>
<div class="abs" style="left:22.7px;top:229.8px;width:176px;height:28px;background:#d3e3fd;border-radius:14px;"></div>
<svg style="left:37.300px;top:238.600px" width="10.800" height="10.600" viewBox="0 0 10.800 10.600"><rect x="0.700" y="0.700" width="9.400" height="9.200" rx="1.600" fill="none" stroke="#0b2a5c" stroke-width="1.300"/><path d="M3 3.500H7.800M3 5.300H7.800M3 7.100H6.200" stroke="#0b2a5c" stroke-width="1"/></svg>
<svg style="left:173.55px;top:237.75px" width="12.5" height="12.5" viewBox="0 0 24 24"><path fill="#1f1f1f" d="M12 8c1.1 0 2-.9 2-2s-.9-2-2-2-2 .9-2 2 .9 2 2 2zm0 2c-1.1 0-2 .9-2 2s.9 2 2 2 2-.9 2-2-.9-2-2-2zm0 6c-1.1 0-2 .9-2 2s.9 2 2 2 2-.9 2-2-.9-2-2-2z" /></svg>
<div class="abs" style="left:212.8px;top:165.300px;width:582.0px;height:480px;background:#fdfefe;border:1px solid #d2d5d8"></div>
<div class="abs" style="left:282.5px;top:263.4px;width:1.2px;height:12.5px;background:#111;border-radius:0px;"></div>
<svg style="left:642px;top:267px" width="6.600" height="12" viewBox="0 0 6 12" preserveAspectRatio="none"><path d="M0.800 0.700C2.300 0.700 3 1.300 3 2.200C3 1.300 3.700 0.700 5.200 0.700M3 2.200V9.800M0.800 11.300C2.300 11.300 3 10.700 3 9.800C3 10.700 3.700 11.300 5.200 11.300M1.800 6H4.200" stroke="#1a1a1a" stroke-width="1" fill="none"/></svg>
<div class="abs" style="left:780.8px;top:212.5px;width:28.6px;height:120px;background:#fff;border-radius:14.3px;box-shadow:0 1px 2.500px rgba(60,64,67,.32),0 1.500px 6px 2px rgba(60,64,67,.16);"></div>
<svg style="left:788.500px;top:223.500px" width="15" height="14" viewBox="0 0 15 14"><path d="M2.300 12.600 3 9.900 11.300 1.800A1.100 1.100 0 0 1 12.800 1.800L13.600 2.600A1.100 1.100 0 0 1 13.600 4.100L5.200 12.100Z" fill="none" stroke="#2b5fcb" stroke-width="1.400" stroke-linejoin="round"/><path d="M10.200 3.200 12.300 5.300" stroke="#2b5fcb" stroke-width="1.200"/><path d="M3.300 0.300 4.100 2.500 6.300 3.300 4.100 4.100 3.300 6.300 2.500 4.100 0.300 3.300 2.500 2.500Z" fill="#2b5fcb"/></svg>
<svg style="left:787.800px;top:252px" width="16" height="15" viewBox="0 0 16 15"><path d="M2.500 1.300H13.900A1.200 1.200 0 0 1 15.100 2.500V9.700A1.200 1.200 0 0 1 13.900 10.900H4L1.300 13.300V2.500A1.200 1.200 0 0 1 2.500 1.300Z" fill="none" stroke="#2b5fcb" stroke-width="1.450" stroke-linejoin="round"/><path d="M8.200 3.500V8.700M5.600 6.100H10.800" stroke="#2b5fcb" stroke-width="1.400"/></svg>
<svg style="left:788.600px;top:280.100px" width="14.400" height="14.400" viewBox="0 0 24 24"><circle cx="12" cy="12" r="10.200" fill="none" stroke="#2b5fcb" stroke-width="2.300"/><circle cx="8.400" cy="9.300" r="1.700" fill="#2b5fcb"/><circle cx="15.600" cy="9.300" r="1.700" fill="#2b5fcb"/><path d="M6.300 13.300H17.700A5.700 5.700 0 0 1 6.300 13.300Z" fill="#2b5fcb"/></svg>
<svg style="left:787.800px;top:308.600px" width="16" height="15" viewBox="0 0 16 15"><path d="M2.500 1.300H13.900A1.200 1.200 0 0 1 15.100 2.500V9.700A1.200 1.200 0 0 1 13.900 10.900H4L1.300 13.300V2.500A1.200 1.200 0 0 1 2.500 1.300Z" fill="none" stroke="#2b5fcb" stroke-width="1.450" stroke-linejoin="round"/><path d="M4.300 8.900V7.200L8.700 3 10.400 4.700 6 8.900Z" fill="#2b5fcb"/><path d="M8.300 8.200H12.300" stroke="#2b5fcb" stroke-width="1.400"/></svg>
<div class="abs" style="left:1013.3px;top:154.3px;width:10.7px;height:486px;background:#fafcfd;border-radius:0px;"></div>
<div class="abs" style="left:1015.4px;top:157px;width:5.9px;height:283.6px;background:#dadce0;border-radius:3px;"></div>
<div class="abs" style="left:1006.6px;top:606.2px;width:32px;height:32px;background:#fff;border-radius:16px;box-shadow:0 1px 2px rgba(60,64,67,.3),0 1px 4px 1px rgba(60,64,67,.15);"></div>
<svg style="left:1010.60px;top:614.40px" width="12" height="12" viewBox="0 0 24 24"><path fill="#333" d="M15.410 7.410L14 6l-6 6 6 6 1.410-1.410L10.830 12z" /></svg>
<svg style="left:18px;top:590px" width="40" height="40" viewBox="0 0 40 40"><circle cx="19.600" cy="19.700" r="17.900" fill="#e9ebee"/><circle cx="19.600" cy="19.700" r="17.100" fill="#1c1c1c"/><rect x="13.300" y="15.800" width="9.800" height="7.800" rx="1.600" fill="none" stroke="#fff" stroke-width="1.500"/><path d="M23.800 18.600 27 16.400V23L23.800 20.800Z" fill="none" stroke="#fff" stroke-width="1.300" stroke-linejoin="round"/></svg>
<div class="abs" style="left:66.6px;top:591.9px;width:216.7px;height:35.7px;background:#1c1c1c;border-radius:17.9px;"></div>
<svg style="left:77px;top:596.300px" width="27" height="27" viewBox="0 0 27 27"><circle cx="13.400" cy="13.400" r="13.100" fill="#f0514a"/><rect x="7.600" y="7.600" width="11.600" height="11.600" rx="1.300" fill="#fbf3f2"/></svg>
<div class="abs" style="left:113.4px;top:605.1px;width:3.1px;height:10.1px;background:#fff;border-radius:0.8px;"></div>
<div class="abs" style="left:119.3px;top:605.1px;width:3.1px;height:10.1px;background:#fff;border-radius:0.8px;"></div>
<svg style="left:135.500px;top:604.700px" width="15" height="11" viewBox="0 0 15 11"><path d="M7.300 1.300V9.700L0.900 5.500ZM14 1.300V9.700L7.600 5.500Z" fill="#fff" stroke="#fff" stroke-width="0.600" stroke-linejoin="round"/></svg>
<div class="abs" style="left:197.2px;top:599.8px;width:1px;height:19.8px;background:#3b3b3b;border-radius:0px;"></div>
<svg style="left:208px;top:603.200px" width="13" height="13" viewBox="0 0 13 13"><circle cx="3.9" cy="1.3" r="0.65" fill="#fff"/><circle cx="6.5" cy="1.3" r="0.65" fill="#fff"/><circle cx="9.1" cy="1.3" r="0.65" fill="#fff"/><circle cx="1.3" cy="3.9" r="0.65" fill="#fff"/><circle cx="3.9" cy="3.9" r="1.0" fill="#fff"/><circle cx="6.5" cy="3.9" r="1.0" fill="#fff"/><circle cx="9.1" cy="3.9" r="1.0" fill="#fff"/><circle cx="11.7" cy="3.9" r="0.65" fill="#fff"/><circle cx="1.3" cy="6.5" r="0.65" fill="#fff"/><circle cx="3.9" cy="6.5" r="1.0" fill="#fff"/><circle cx="6.5" cy="6.5" r="1.0" fill="#fff"/><circle cx="9.1" cy="6.5" r="1.0" fill="#fff"/><circle cx="11.7" cy="6.5" r="0.65" fill="#fff"/><circle cx="1.3" cy="9.1" r="0.65" fill="#fff"/><circle cx="3.9" cy="9.1" r="1.0" fill="#fff"/><circle cx="6.5" cy="9.1" r="1.0" fill="#fff"/><circle cx="9.1" cy="9.1" r="1.0" fill="#fff"/><circle cx="11.7" cy="9.1" r="0.65" fill="#fff"/><circle cx="3.9" cy="11.7" r="0.65" fill="#fff"/><circle cx="6.5" cy="11.7" r="0.65" fill="#fff"/><circle cx="9.1" cy="11.7" r="0.65" fill="#fff"/></svg>
<svg style="left:231.40px;top:602.40px" width="13.6" height="13.6" viewBox="0 0 24 24"><path fill="#fff" d="M12 5V1L7 6l5 5V7c3.310 0 6 2.690 6 6s-2.690 6-6 6-6-2.690-6-6H4c0 4.420 3.580 8 8 8s8-3.580 8-8-3.580-8-8-8z" /></svg>
<svg style="left:254.600px;top:603.500px" width="12" height="14" viewBox="0 0 12 14"><path d="M0.600 2.600H11.400M4 2.400V1.100H8V2.400" stroke="#fff" stroke-width="1.300" fill="none"/><path d="M2 3.800V11.400A1.300 1.300 0 0 0 3.300 12.700H8.700A1.300 1.300 0 0 0 10 11.400V3.800" stroke="#fff" stroke-width="1.400" fill="none"/><path d="M4.700 5V10.600M7.300 5V10.600" stroke="#fff" stroke-width="1.100"/></svg>
<div class="t" id="tab1" style="left:144px;top:11.24px;font-size:9.05px;letter-spacing:0.021px;color:#e6e6e6;-webkit-text-stroke:0.200px #e6e6e6;width:104.500px;overflow:hidden;-webkit-mask-image:linear-gradient(90deg,#000 88%,transparent 100%);mask-image:linear-gradient(90deg,#000 88%,transparent 100%);">Automation: LinkedIn Activity / Engagement</div>
<div class="t" id="tab2" style="left:312.8px;top:11.24px;font-size:9.05px;letter-spacing:-0.031px;color:#d2d2d2;-webkit-text-stroke:0.200px #d2d2d2;">Clay | Target Profiles</div>
<div class="t" id="url" style="left:111.7px;top:40.52px;font-size:11.2px;letter-spacing:-0.387px;color:#e4e4e4;-webkit-text-stroke:0.200px #e4e4e4;">docs.google.com/document/d/1tUzcnKF7TdDXs9qw1fdGkQK-56j2Tdd4VIoEaiAjaaE/edit?tab=t.0</div>
<div class="t" id="newchrome" style="left:902px;top:40.83px;font-size:10px;letter-spacing:-0.206px;color:#c2e7ff;-webkit-text-stroke:0.250px #c2e7ff;">New Chrome available</div>
<div class="t" id="title" style="left:43.75px;top:71.86px;font-size:13.4px;letter-spacing:-0.196px;color:#1f1f1f;-webkit-text-stroke:0.250px #1f1f1f;">Automation: LinkedIn Activity / Engagement</div>
<div class="t" id="menu0" style="left:44.3px;top:90.50px;font-size:10.4px;letter-spacing:-0.483px;color:#1f1f1f;-webkit-text-stroke:0.200px #1f1f1f;">File</div>
<div class="t" id="menu1" style="left:71.7px;top:90.50px;font-size:10.4px;letter-spacing:-0.202px;color:#1f1f1f;-webkit-text-stroke:0.200px #1f1f1f;">Edit</div>
<div class="t" id="menu2" style="left:101px;top:90.50px;font-size:10.4px;letter-spacing:-0.415px;color:#1f1f1f;-webkit-text-stroke:0.200px #1f1f1f;">View</div>
<div class="t" id="menu3" style="left:134.2px;top:90.50px;font-size:10.4px;letter-spacing:0.020px;color:#1f1f1f;-webkit-text-stroke:0.200px #1f1f1f;">Insert</div>
<div class="t" id="menu4" style="left:172.5px;top:90.50px;font-size:10.4px;letter-spacing:-0.084px;color:#1f1f1f;-webkit-text-stroke:0.200px #1f1f1f;">Format</div>
<div class="t" id="menu5" style="left:216.6px;top:90.50px;font-size:10.4px;letter-spacing:-0.091px;color:#1f1f1f;-webkit-text-stroke:0.200px #1f1f1f;">Tools</div>
<div class="t" id="menu6" style="left:252.5px;top:90.50px;font-size:10.4px;letter-spacing:-0.148px;color:#1f1f1f;-webkit-text-stroke:0.200px #1f1f1f;">Extensions</div>
<div class="t" id="menu7" style="left:313.5px;top:90.50px;font-size:10.4px;letter-spacing:-0.292px;color:#1f1f1f;-webkit-text-stroke:0.200px #1f1f1f;">Help</div>
<div class="t" id="share" style="left:886.9px;top:78.69px;font-size:11px;letter-spacing:-0.440px;color:#001d35;-webkit-text-stroke:0.400px #001d35;">Share</div>
<div class="t" id="zoom" style="left:163.7px;top:119.28px;font-size:10.3px;letter-spacing:-0.281px;color:#444746;-webkit-text-stroke:0.200px #444746;">100%</div>
<div class="t" id="style" style="left:225.7px;top:119.28px;font-size:10.3px;letter-spacing:0.084px;color:#444746;-webkit-text-stroke:0.200px #444746;">Normal text</div>
<div class="t" id="font" style="left:318.5px;top:119.28px;font-size:10.3px;letter-spacing:0.023px;color:#444746;-webkit-text-stroke:0.200px #444746;">Arial</div>
<div class="t" id="fsize" style="left:412.8px;top:119.28px;font-size:10.3px;color:#1f1f1f;-webkit-text-stroke:0.250px #1f1f1f;letter-spacing:-1.300px;">11</div>
<div class="t" id="tcolor" style="left:531.4px;top:118.07px;font-size:9.6px;color:#444746;-webkit-text-stroke:0.350px #444746;">A</div>
<div class="t" id="editing" style="left:894px;top:119.28px;font-size:10.3px;letter-spacing:0.086px;color:#444746;-webkit-text-stroke:0.200px #444746;">Editing</div>
<div class="t" id="rn0" style="left:211.20000000000002px;top:143.15px;font-size:7.5px;color:#3c4043;">1</div>
<div class="t" id="rn2" style="left:347.8px;top:143.15px;font-size:7.5px;color:#3c4043;">1</div>
<div class="t" id="rn3" style="left:416.1px;top:143.15px;font-size:7.5px;color:#3c4043;">2</div>
<div class="t" id="rn4" style="left:484.4px;top:143.15px;font-size:7.5px;color:#3c4043;">3</div>
<div class="t" id="rn5" style="left:552.6999999999999px;top:143.15px;font-size:7.5px;color:#3c4043;">4</div>
<div class="t" id="rn6" style="left:621.0px;top:143.15px;font-size:7.5px;color:#3c4043;">5</div>
<div class="t" id="rn7" style="left:689.3px;top:143.15px;font-size:7.5px;color:#3c4043;">6</div>
<div class="t" id="rn8" style="left:757.6px;top:143.15px;font-size:7.5px;color:#3c4043;">7</div>
<div class="t" id="doctabs" style="left:31.4px;top:205.53px;font-size:10.6px;letter-spacing:0.062px;color:#444746;-webkit-text-stroke:0.250px #444746;">Document tabs</div>
<div class="t" id="tabone" style="left:56.6px;top:238.87px;font-size:10.2px;letter-spacing:-0.480px;color:#0b2149;-webkit-text-stroke:0.300px #0b2149;">Tab 1</div>
<div class="t" id="hint1" style="left:28.6px;top:265.50px;font-size:9.1px;letter-spacing:0.108px;color:#70757a;font-style:italic;">Headings you add to the document</div>
<div class="t" id="hint2" style="left:28.6px;top:277.70px;font-size:9.1px;letter-spacing:-0.021px;color:#70757a;font-style:italic;">will appear here.</div>
<div class="t" id="h1" style="left:282.5px;top:235.86px;font-size:12.33px;letter-spacing:-0.029px;color:#000;font-weight:700;">What is the goal of automation?</div>
<div class="t" id="p1" style="left:282.6px;top:266.17px;font-size:10.43px;letter-spacing:0.004px;color:#000;">To find people in your ICP engaging with your or your competitor’s content.</div>
<div class="t" id="h2" style="left:282.5px;top:293.16px;font-size:12.33px;letter-spacing:-0.034px;color:#000;font-weight:700;">What are the steps in automation?</div>
<div class="t" id="n0" style="left:299.6px;top:323.27px;font-size:10.43px;color:#000;">1.</div>
<div class="t" id="li0" style="left:316.6px;top:323.27px;font-size:10.43px;letter-spacing:0.006px;color:#000;"><b>Target Profile:</b> Enter LinkedIn URL of your competitor or team member</div>
<div class="t" id="n1" style="left:299.6px;top:336.97px;font-size:10.43px;color:#000;">2.</div>
<div class="t" id="li1" style="left:316.6px;top:336.97px;font-size:10.43px;letter-spacing:-0.015px;color:#000;"><b>Posts:</b> Get all of their recent posts</div>
<div class="t" id="n2" style="left:299.6px;top:350.67px;font-size:10.43px;color:#000;">3.</div>
<div class="t" id="li2" style="left:316.6px;top:350.67px;font-size:10.43px;letter-spacing:-0.004px;color:#000;"><b>People Engaging:</b> Find people engaging with your competitor or team member’s posts</div>
<div class="t" id="n3" style="left:299.6px;top:364.07px;font-size:10.43px;color:#000;">4.</div>
<div class="t" id="li3" style="left:316.6px;top:364.07px;font-size:10.43px;letter-spacing:0.001px;color:#000;"><b>ICP Filtration:</b> Filter people who are within your ICP</div>
<div class="t" id="timer" style="left:163.2px;top:605.44px;font-size:9.4px;letter-spacing:1.211px;color:#fff;font-weight:700;">0:00</div>
</div>
</body>
</html>
